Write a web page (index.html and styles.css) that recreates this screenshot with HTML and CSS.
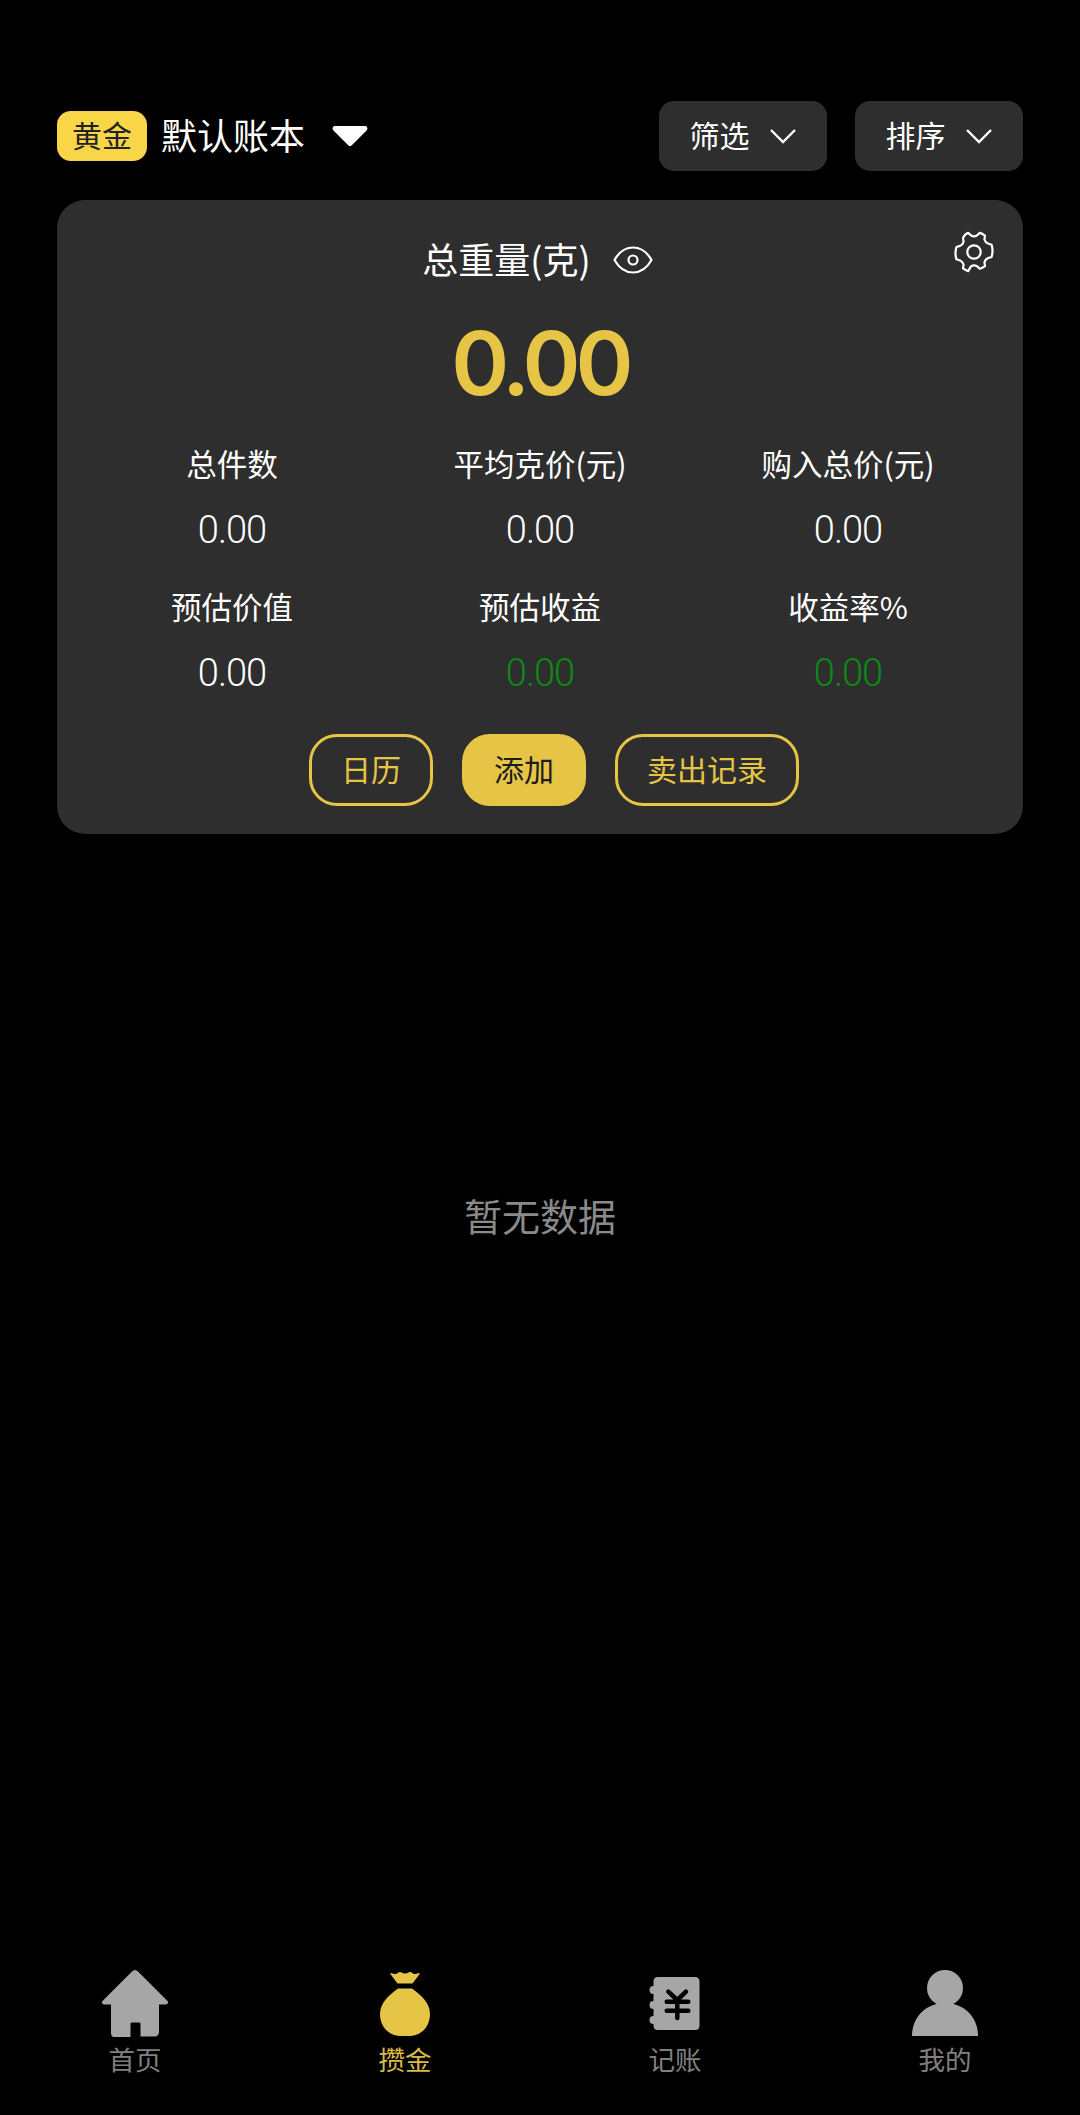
FILE: index.html
```html
<!DOCTYPE html>
<html lang="zh">
<head>
  <meta charset="UTF-8">
  <meta name="viewport" content="width=device-width, initial-scale=1.0" />
  <title>攒金</title>
  <link rel="stylesheet" href="styles.css">
</head>
<body>
  <div class="page">
    <div class="header">
      <span class="badge">黄金</span>
      <span class="book-name">默认账本</span>
      <svg class="book-arrow" width="36" height="22" viewBox="0 0 36 22"><path d="M3 1h30c2 0 3 2 2 4L20 20c-1 1.500-3 1.500-4 0L1 5C0 3 1 1 3 1z" fill="#fff"/></svg>
      <div class="header-btns">
        <button class="drop-btn"><span class="btn-text">筛选</span>
          <svg width="28" height="16" viewBox="0 0 28 16"><path d="M2 2l12 12L26 2" fill="none" stroke="#fff" stroke-width="2.400"/></svg>
        </button>
        <button class="drop-btn"><span class="btn-text">排序</span>
          <svg width="28" height="16" viewBox="0 0 28 16"><path d="M2 2l12 12L26 2" fill="none" stroke="#fff" stroke-width="2.400"/></svg>
        </button>
      </div>
    </div>

    <div class="card">
      <svg class="gear" width="44" height="44" viewBox="0 0 38 38" fill="none" stroke="#fff" stroke-width="1.900" stroke-linejoin="round">
        <path d="M14 2.500l2.500 2.300c1.500.800 3.500.800 5 0L24 2.500c1.500.400 3 1.200 4.500 2.300l-.5 3.400c.500 1.500 1.500 3 3 3.500l3.200 1c.5 1.800.8 3.500.8 5.300s-.3 3.500-.8 5.300l-3.200 1c-1.500.500-2.500 2-3 3.500l.5 3.400c-1.500 1.100-3 1.900-4.500 2.300l-2.500-2.300c-1.500-.800-3.500-.800-5 0L14 35.500c-1.500-.400-3-1.200-4.500-2.300l.5-3.400c-.500-1.500-1.500-3-3-3.500l-3.200-1c-.5-1.800-.8-3.500-.8-5.300s.3-3.500.8-5.300l3.200-1c1.500-.500 2.500-2 3-3.500l-.5-3.400C11 3.700 12.500 2.900 14 2.500z"/>
        <circle cx="19" cy="19" r="5.800"/>
      </svg>
      <div class="total-title">
        <span class="total-text">总重量(克)</span>
        <svg width="40" height="28" viewBox="0 0 40 28" fill="none" stroke="#fff" stroke-width="2.200">
          <path d="M1.500 14C6 6 12.500 1.500 20 1.500S34 6 38.500 14C34 22 27.500 26.500 20 26.500S6 22 1.500 14z"/>
          <circle cx="20" cy="14" r="4.500"/>
        </svg>
      </div>
      <div class="total-num">0.00</div>

      <div class="stats">
        <div class="stat"><div class="stat-label">总件数</div><div class="stat-val">0.00</div></div>
        <div class="stat"><div class="stat-label">平均克价(元)</div><div class="stat-val">0.00</div></div>
        <div class="stat"><div class="stat-label">购入总价(元)</div><div class="stat-val">0.00</div></div>
        <div class="stat"><div class="stat-label">预估价值</div><div class="stat-val">0.00</div></div>
        <div class="stat"><div class="stat-label">预估收益</div><div class="stat-val green">0.00</div></div>
        <div class="stat"><div class="stat-label">收益率%</div><div class="stat-val green">0.00</div></div>
      </div>

      <div class="actions">
        <button class="act-btn">日历</button>
        <button class="act-btn solid">添加</button>
        <button class="act-btn">卖出记录</button>
      </div>
    </div>

    <div class="empty">暂无数据</div>

    <div class="tabbar">
      <div class="tab">
        <svg width="68" height="68" viewBox="0 0 68 68"><path d="M34 1c1 0 2 .5 3 1.500l29 29c2 2 1 4-1.500 4H58v27c0 3-1 5-5 5H39.500V55c0-1-.5-1.500-1.500-1.500h-7c-1 0-1.500.5-1.500 1.500v13.500H15c-4 0-5-2-5-5V35.500H3.500C1 35.500 0 33.500 2 31.500l29-29C32 1.500 33 1 34 1z" fill="#a6a6a6"/></svg>
        <span>首页</span>
      </div>
      <div class="tab active">
        <svg width="68" height="68" viewBox="0 0 68 68" fill="#e6c546">
          <path d="M19 4.500c2.500-1 3.500.5 5.500.5 1.500 0 3-2 4.500-2 1.500 0 2 1.500 5 1.500s3.500-1.500 5-1.500 3 2 4.500 2 3-1.500 5.500-.5L41.500 14.500h-15z"/>
          <path d="M27 19.500h14C50 26 59 34 59 45 59 58 50 67 38 67h-8C18 67 9 58 9 45c0-11 9-19 18-25.500z"/>
        </svg>
        <span>攒金</span>
      </div>
      <div class="tab">
        <svg width="68" height="68" viewBox="0 0 68 68">
          <path d="M17 8h37c3 0 4.500 1.500 4.500 4.500v44c0 3-1.500 4.500-4.500 4.500H17c-3 0-4.500-1.500-4.500-4.500V55a4 4 0 0 1 0-8v-7a4 4 0 0 1 0-8v-7a4 4 0 0 1 0-8v-4.500C12.500 9.500 14 8 17 8z" fill="#a6a6a6"/>
          <path d="M27.300 22.700l9 8.300 8.700-8.300M25.700 32.700h21.600M25.700 41.700h21.600M36.300 31v18" fill="none" stroke="#000" stroke-width="4.500" stroke-linecap="round" stroke-linejoin="round"/>
        </svg>
        <span>记账</span>
      </div>
      <div class="tab">
        <svg width="68" height="68" viewBox="0 0 68 68" fill="#a6a6a6"><circle cx="34" cy="19" r="18"/><path d="M1 67c0-20 15-33 33-33s33 13 33 33z"/></svg>
        <span>我的</span>
      </div>
    </div>
  </div>
</body>
</html>
```

FILE: styles.css
```css
body {
  margin: 0;
  background: #000;
  font-family: "Noto Sans CJK SC", "Noto Sans", sans-serif;
  color: #fff;
}

.page {
  height: 2115px;
  display: flex;
  flex-direction: column;
  overflow: hidden;
}

button {
  font-family: inherit;
  border: none;
  padding: 0;
}

.header {
  display: flex;
  align-items: center;
  margin: 101px 57px 0;
  height: 70px;
}

.badge {
  width: 90px;
  height: 50px;
  line-height: 47px;
  text-align: center;
  background: #f9d648;
  color: #222;
  font-size: 30px;
  border-radius: 14px;
}

.book-name {
  margin-left: 14px;
  margin-bottom: 5px;
  font-size: 36px;
}

.book-arrow {
  margin-left: 27px;
}

.header-btns {
  margin-left: auto;
  display: flex;
  gap: 28px;
}

.drop-btn {
  width: 168px;
  height: 70px;
  background: #2e2e2e;
  color: #fff;
  font-size: 30px;
  border-radius: 15px;
  display: flex;
  align-items: center;
  justify-content: center;
  gap: 19px;
}

.btn-text {
  margin-bottom: 5px;
}

.card {
  position: relative;
  margin: 29px 57px 0;
  height: 634px;
  box-sizing: border-box;
  padding: 0 21px;
  background: #2e2e2e;
  border-radius: 28px;
}

.gear {
  position: absolute;
  top: 30px;
  right: 27px;
}

.total-title {
  display: flex;
  align-items: center;
  justify-content: center;
  gap: 22px;
  height: 60px;
  padding-top: 30px;
  padding-right: 5px;
  font-size: 36px;
}

.total-text {
  margin-bottom: 5px;
}

.total-num {
  margin-top: 23px;
  text-align: center;
  font-family: Inter, sans-serif;
  font-weight: 600;
  font-size: 88px;
  line-height: 100px;
  letter-spacing: -5px;
  color: #e6c546;
}

.stats {
  display: grid;
  grid-template-columns: repeat(3, 1fr);
  row-gap: 32px;
  margin-top: 28px;
  text-align: center;
}

.stat-label {
  font-size: 30.5px;
  line-height: 44px;
}

.stat-val {
  margin-top: 23px;
  font-family: Roboto, sans-serif;
  font-weight: 300;
  font-size: 38px;
  line-height: 44px;
  letter-spacing: -1px;
}

.green {
  color: #0c8a14;
}

.actions {
  display: flex;
  justify-content: center;
  gap: 29px;
  margin-top: 39px;
  padding-left: 28px;
}

.act-btn {
  box-sizing: border-box;
  height: 72px;
  padding: 0 29px 4px;
  background: transparent;
  border: 3px solid #e6c546;
  border-radius: 28px;
  color: #e6c546;
  font-size: 30px;
}

.act-btn.solid {
  background: #e6c546;
  color: #1c1c1c;
}

.empty {
  flex: 1;
  padding-top: 351px;
  text-align: center;
  font-size: 38px;
  line-height: 60px;
  color: #8a8a8a;
}

.tabbar {
  display: grid;
  grid-template-columns: repeat(4, 270px);
  padding-bottom: 34px;
  text-align: center;
}

.tab {
  display: flex;
  flex-direction: column;
  align-items: center;
  font-size: 26.5px;
  line-height: 44px;
  color: #808080;
}

.tab.active {
  color: #d9bb46;
}
```
